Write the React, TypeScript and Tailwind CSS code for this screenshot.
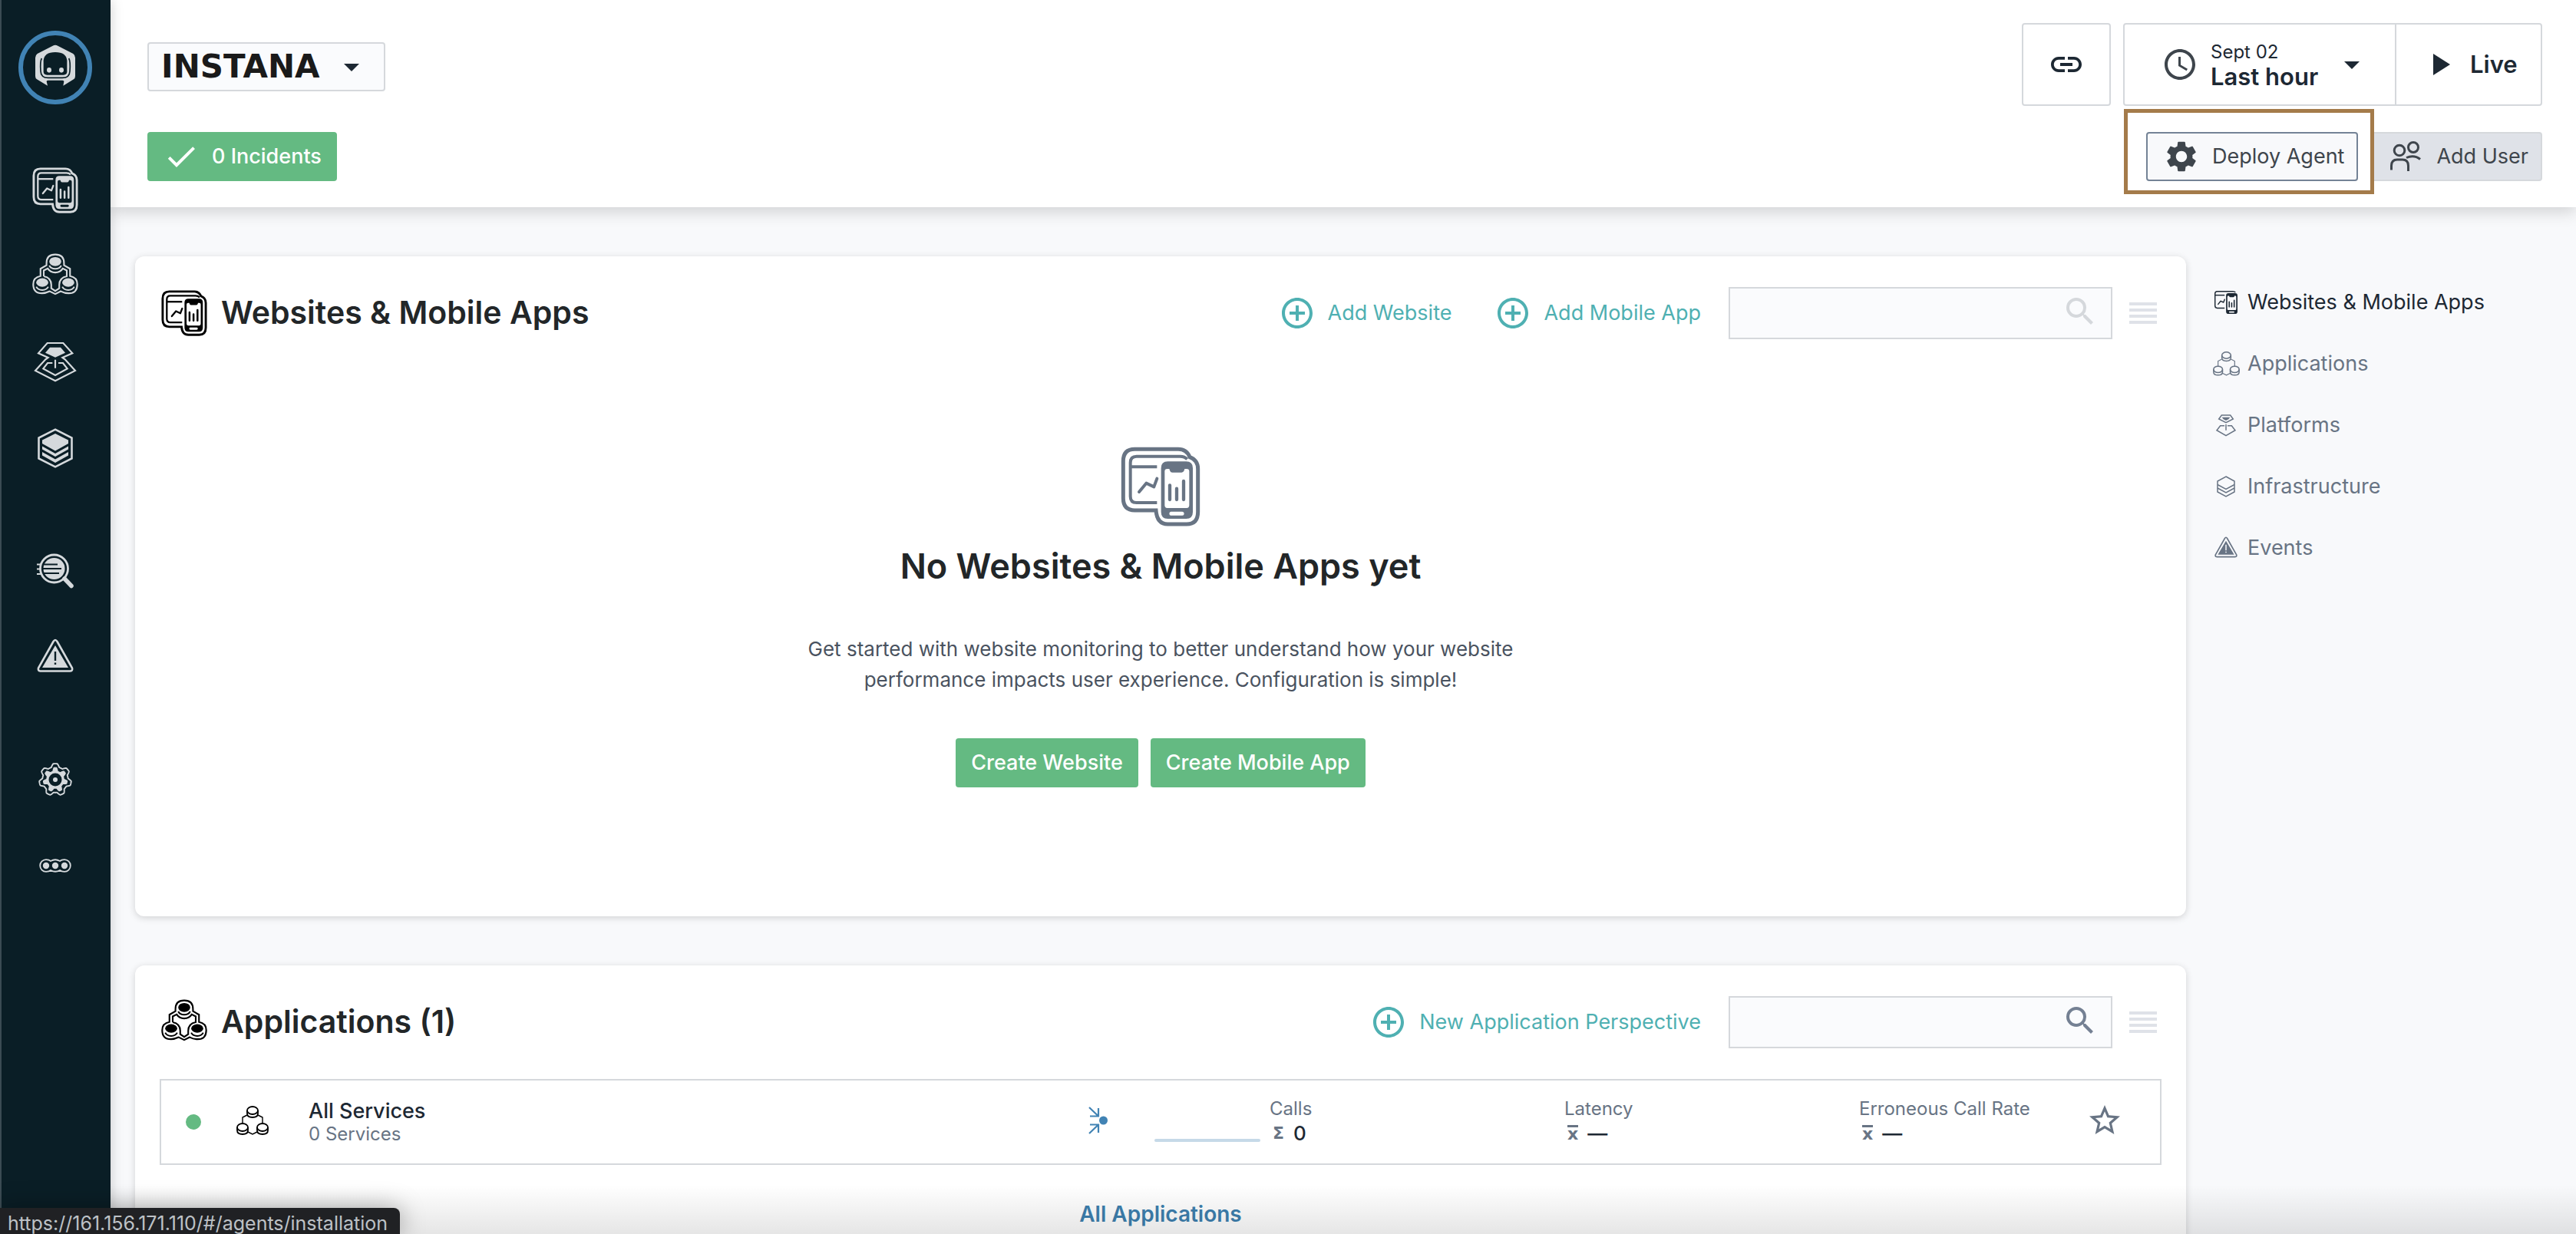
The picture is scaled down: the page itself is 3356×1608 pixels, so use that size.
import React from "react";
import {
  MdAccessTime,
  MdAddCircleOutline,
  MdArrowDropDown,
  MdCheck,
  MdLink,
  MdPlayArrow,
  MdSearch,
  MdSettings,
  MdStarBorder,
} from "react-icons/md";

type IconProps = { className?: string };

/* ---------- product icons ---------- */

function BrowserAndPhone() {
  return (
    <>
      <g fill="none" stroke="currentColor" strokeWidth="12">
        <path d="M172 254H92Q68 254 68 230V98Q68 73 92 73H262Q280 73 290 84" />
        <path d="M68 114H172" />
        <path d="M102 212L130 178L160 192L172 160" strokeLinecap="round" strokeLinejoin="round" />
      </g>
      <path
        fill="currentColor"
        fillRule="evenodd"
        d="M214 93H286Q312 93 312 119V291Q312 317 286 317H214Q188 317 188 291V119Q188 93 214 93ZM212 122Q202 122 202 132V264Q202 275 212 275H288Q298 275 298 264V132Q298 122 288 122H280Q277 136 268 136H232Q223 136 220 122ZM227 289Q220 289 220 296.500Q220 304 227 304H271Q278 304 278 296.500Q278 289 271 289Z"
      />
      <path
        d="M222 186V242M249 199V242M276 170V242"
        stroke="currentColor"
        strokeWidth="13"
        strokeLinecap="round"
      />
    </>
  );
}

function WebsitesIcon({ className }: IconProps) {
  return (
    <svg viewBox="30 35 312 312" className={className} aria-hidden="true">
      <path
        d="M85 45H255Q288 45 300 76Q332 88 332 122V290Q332 338 288 338H214Q172 338 168 284H85Q40 284 40 237V92Q40 45 85 45Z"
        fill="none"
        stroke="currentColor"
        strokeWidth="15"
      />
      <BrowserAndPhone />
    </svg>
  );
}

function WebsitesSmallIcon({ className }: IconProps) {
  return (
    <svg viewBox="62 67 250 250" className={className} aria-hidden="true">
      <BrowserAndPhone />
    </svg>
  );
}

function ApplicationsIcon({ className }: IconProps) {
  return (
    <svg viewBox="76 898 184 184" className={className} aria-hidden="true">
      <g fill="none" stroke="currentColor" strokeWidth="6.500">
        <path d="M133 946V938Q133 903 168 903Q203 903 203 938V946L227 960V989Q256 994 256 1022Q256 1058 222 1058Q205 1058 190 1050L168 1061L146 1050Q130 1058 115 1058Q80 1058 80 1022Q80 994 109 989V960Z" />
        <path d="M122 990V967L138 959Q148 975 168 975Q188 975 198 959L214 967V990Q184 996 184 1024V1038L168 1049L152 1038V1024Q152 996 122 990" />
        <path d="M144 947Q150 960 168 960Q186 960 192 947" strokeWidth="6" />
        <path d="M92 1032Q98 1045 116 1045Q134 1045 140 1032" strokeWidth="6" />
        <path d="M196 1032Q202 1045 220 1045Q238 1045 244 1032" strokeWidth="6" />
      </g>
      <g fill="currentColor">
        <ellipse cx="168" cy="931" rx="24" ry="18" />
        <ellipse cx="116" cy="1015" rx="24" ry="17" />
        <ellipse cx="220" cy="1015" rx="24" ry="17" />
      </g>
    </svg>
  );
}

function ApplicationsSmallIcon({ className }: IconProps) {
  return (
    <svg
      viewBox="0 0 42 38"
      className={className}
      fill="none"
      stroke="currentColor"
      strokeWidth="1.800"
      aria-hidden="true"
    >
      <ellipse cx="21" cy="6" rx="7" ry="5" />
      <path d="M14 6V10Q14 15 21 15Q28 15 28 10V6" />
      <ellipse cx="8" cy="28" rx="7" ry="5" />
      <path d="M1 28V32Q1 37 8 37Q15 37 15 32V28" />
      <ellipse cx="34" cy="28" rx="7" ry="5" />
      <path d="M27 28V32Q27 37 34 37Q41 37 41 32V28" />
      <path d="M14 12L8 15V23M28 12L34 15V23M14 33.500L21 37L28 33.500" strokeWidth="1.400" />
    </svg>
  );
}

function PlatformsIcon({ className }: IconProps) {
  return (
    <svg viewBox="84 1246 168 160" className={className} aria-hidden="true">
      <g fill="none" stroke="currentColor" strokeWidth="6.500">
        <path d="M137 1252H199L235 1292L196 1309L206 1316L246 1360L168 1400L90 1360L130 1316L140 1309L102 1292Z" />
        <path d="M157 1330H138L121 1352L168 1378L215 1352L198 1330H180M168 1317V1350" />
      </g>
      <path d="M147 1269H189L207 1290L168 1308L129 1290Z" fill="currentColor" />
    </svg>
  );
}

function PlatformsSmallIcon({ className }: IconProps) {
  return (
    <svg viewBox="135 598 90 90" className={className} aria-hidden="true">
      <g fill="none" stroke="currentColor" strokeWidth="4.500">
        <path d="M163 604H197L208 619L180 633L152 619Z" />
        <path d="M174 645H158L144 663L180 684L216 663L202 645H186M180 640V663" />
      </g>
      <path d="M164 612H196L190 620L180 625L170 620Z" fill="currentColor" />
    </svg>
  );
}

function InfrastructureIcon({ className }: IconProps) {
  return (
    <svg viewBox="0 0 46 52" className={className} aria-hidden="true">
      <path
        d="M23 1.600L44.500 12.500V39.500L23 50.400L1.500 39.500V12.500Z"
        fill="none"
        stroke="currentColor"
        strokeWidth="2.600"
      />
      <path
        fill="currentColor"
        d="M23 7L40 15.500V20L23 29.500L6 20V15.500ZM6 23.500L23 33L40 23.500V27.500L23 37L6 27.500ZM6 31L23 40.500L40 31V35.500L23 45L6 35.500Z"
      />
    </svg>
  );
}

function InfrastructureSmallIcon({ className }: IconProps) {
  return (
    <svg
      viewBox="0 0 24 28"
      className={className}
      fill="none"
      stroke="currentColor"
      strokeWidth="1.500"
      aria-hidden="true"
    >
      <path d="M12 1L23 7V21L12 27L1 21V7Z" />
      <path d="M1 11.500L12 17.500L23 11.500M1 16L12 22L23 16" />
    </svg>
  );
}

function AnalyzeIcon({ className }: IconProps) {
  return (
    <svg viewBox="0 0 48 46" className={className} fill="none" aria-hidden="true">
      <circle cx="22.500" cy="20" r="18" stroke="currentColor" strokeWidth="2.800" />
      <circle cx="22.500" cy="20" r="14" fill="currentColor" />
      <path d="M8 14.500H27M8 20H32M8 26H29" stroke="#0a1e26" strokeWidth="2" />
      <path d="M0 14.500H5M0 20.500H4M0 27H5" stroke="currentColor" strokeWidth="2" />
      <path d="M36 33L45 42.500" stroke="currentColor" strokeWidth="5.500" strokeLinecap="round" />
    </svg>
  );
}

function EventsIcon({ className }: IconProps) {
  return (
    <svg viewBox="0 0 48 48" className={className} aria-hidden="true">
      <path
        d="M21.500 4Q24 0 26.500 4L46 38.500Q47 42 43.500 42.500H4.500Q1 42 2 38.500Z"
        fill="none"
        stroke="currentColor"
        strokeWidth="2.600"
      />
      <path
        fill="currentColor"
        fillRule="evenodd"
        d="M24 9L41 38H7ZM22.800 17V29H25.200V17ZM22.800 31.500V34H25.200V31.500Z"
      />
    </svg>
  );
}

function cogPath(teeth: number, base: number, depth: number) {
  const points: string[] = [];
  for (let i = 0; i < 280; i++) {
    const a = (i / 280) * Math.PI * 2;
    const wave = Math.max(-0.8, Math.min(0.8, Math.cos(a * teeth) * 1.3));
    const r = base + depth * wave;
    points.push(`${(22 + r * Math.sin(a)).toFixed(2)} ${(22 - r * Math.cos(a)).toFixed(2)}`);
  }
  return `M${points.join("L")}Z`;
}

const OUTER_COG = cogPath(7, 18.8, 2.6);
const INNER_COG = cogPath(7, 14, 2.8);

function SettingsCogIcon({ className }: IconProps) {
  return (
    <svg viewBox="0 0 44 44" className={className} aria-hidden="true">
      <path d={OUTER_COG} fill="none" stroke="currentColor" strokeWidth="1.900" strokeLinejoin="round" />
      <path
        d={`${INNER_COG}M22 13.500A8.500 8.500 0 1 0 22 30.500A8.500 8.500 0 1 0 22 13.500Z`}
        fill="currentColor"
        fillRule="evenodd"
      />
      <circle cx="22" cy="22" r="3" fill="currentColor" />
    </svg>
  );
}

function MoreIcon({ className }: IconProps) {
  return (
    <svg viewBox="0 0 42 18" className={className} aria-hidden="true">
      <path
        d="M9 1.200Q13 1.200 15 3Q21 -.500 27 3Q29 1.200 33 1.200A7.800 7.800 0 0 1 33 16.800Q29 16.800 27 15Q21 18.500 15 15Q13 16.800 9 16.800A7.800 7.800 0 0 1 9 1.200Z"
        fill="none"
        stroke="currentColor"
        strokeWidth="1.800"
      />
      <g fill="currentColor">
        <circle cx="9" cy="9" r="4.200" />
        <circle cx="21" cy="9" r="4.200" />
        <circle cx="33" cy="9" r="4.200" />
      </g>
    </svg>
  );
}

function RobotLogo({ className }: IconProps) {
  return (
    <svg viewBox="24 30 288 288" className={className} aria-hidden="true">
      <circle cx="168" cy="174" r="135" fill="none" stroke="#4183b4" strokeWidth="18" />
      <path
        d="M158 89Q168 84 178 89L238 120Q246 126 246 136V208Q246 216 240 220L199 245L202 229Q203 224 196 224H140Q133 224 134 229L138 245L96 220Q90 216 90 208V136Q90 126 98 120Z"
        fill="#d5d9dc"
      />
      <path
        d="M122 148Q124 114 168 114Q212 114 214 148V190Q214 203 200 203H136Q122 203 122 190Z"
        fill="#0a1e26"
      />
      <path
        d="M115 138Q108 150 111 188Q112 214 140 214H196Q224 214 225 188Q228 150 221 138"
        fill="none"
        stroke="#0a1e26"
        strokeWidth="5"
      />
      <g fill="#d5d9dc">
        <ellipse cx="144" cy="184" rx="9" ry="10" />
        <ellipse cx="192" cy="184" rx="9" ry="10" />
      </g>
    </svg>
  );
}

function PeopleIcon({ className }: IconProps) {
  return (
    <svg
      viewBox="0 0 40 40"
      className={className}
      fill="none"
      stroke="currentColor"
      strokeWidth="3"
      aria-hidden="true"
    >
      <circle cx="12" cy="12" r="6.800" />
      <circle cx="30" cy="8" r="6.500" />
      <path d="M1.500 37.500V32Q1.500 24 9 24H16Q23.500 24 23.500 32V39" />
      <path d="M21 21.500Q31 17 39 23.500" />
    </svg>
  );
}

function IncomingIcon({ className }: IconProps) {
  return (
    <svg
      viewBox="0 0 26 36"
      className={className}
      fill="none"
      stroke="currentColor"
      strokeWidth="2.200"
      aria-hidden="true"
    >
      <path d="M1 1L12 11.500M13 2V12.500H2M1 35L12 24.500M13 34V23.500H2" />
      <circle cx="19.500" cy="18" r="5.500" fill="currentColor" stroke="none" />
    </svg>
  );
}

function ListIcon({ className }: IconProps) {
  return (
    <svg viewBox="0 0 36 28" className={className} fill="currentColor" aria-hidden="true">
      <path d="M0 0H36V4H0ZM0 8H36V12H0ZM0 16H36V20H0ZM0 24H36V28H0Z" />
    </svg>
  );
}

/* ---------- building blocks ---------- */

const sidebarGroups = [
  [
    { label: "Websites & Mobile Apps", icon: <WebsitesIcon className="size-[60px]" /> },
    { label: "Applications", icon: <ApplicationsIcon className="size-[60px]" /> },
    { label: "Platforms", icon: <PlatformsIcon className="w-14" /> },
    { label: "Infrastructure", icon: <InfrastructureIcon className="w-[46px]" /> },
  ],
  [
    { label: "Analytics", icon: <AnalyzeIcon className="w-12" /> },
    { label: "Events", icon: <EventsIcon className="w-12" /> },
  ],
  [
    { label: "Settings", icon: <SettingsCogIcon className="w-11" /> },
    { label: "More", icon: <MoreIcon className="w-[42px]" /> },
  ],
];

function Sidebar() {
  return (
    <aside className="relative z-20 flex w-36 shrink-0 flex-col items-center border-l-2 border-[#3b4b53] bg-[#0a1e26] pt-10 pr-0.5 text-[#d5d9dc] shadow-[0_0_16px_rgba(0,0,0,0.2)]">
      <a href="#/" aria-label="Home">
        <RobotLogo className="size-24" />
      </a>
      <nav aria-label="Main" className="mt-14 flex flex-col gap-12">
        {sidebarGroups.map((group, i) => (
          <div key={i} className="flex flex-col">
            {group.map((item) => (
              <a
                key={item.label}
                href="#/"
                aria-label={item.label}
                className="flex h-28 w-32 items-center justify-center"
              >
                {item.icon}
              </a>
            ))}
          </div>
        ))}
      </nav>
    </aside>
  );
}

function Header() {
  return (
    <header className="relative z-10 flex items-start justify-between bg-white pr-11 pb-[34px] pl-12 text-[#1d2833] shadow-[0_6px_20px_rgba(0,0,0,0.16)]">
      <div className="flex flex-col items-start gap-[53px] pt-[55px]">
        <button
          type="button"
          aria-haspopup="listbox"
          className="flex h-16 w-[310px] items-center justify-between rounded border-2 border-[#d5d8dc] bg-[#fafbfd] pr-[18px] pl-4"
        >
          <span className="font-['DejaVu_Sans',sans-serif] text-[42px] leading-none font-bold text-[#1a1a1a]">
            INSTANA
          </span>
          <MdArrowDropDown className="size-12" />
        </button>
        <button
          type="button"
          className="flex h-16 items-center gap-4 rounded bg-[#64ba82] px-5 text-[27px] font-medium text-white"
        >
          <MdCheck className="size-12" />
          0 Incidents
        </button>
      </div>

      <div className="flex flex-col items-end gap-[34px] pt-[30px]">
        <div className="flex h-[108px] gap-4">
          <button
            type="button"
            aria-label="Copy link"
            className="flex w-[116px] items-center justify-center rounded border-2 border-[#d5d8dc]"
          >
            <MdLink className="size-12" />
          </button>
          <div className="flex rounded border-2 border-[#d5d8dc]">
            <button type="button" className="flex w-[352px] items-center pl-12 text-left">
              <MdAccessTime className="size-12 text-[#3e454c]" />
              <span className="ml-4 w-[152px]">
                <span className="block text-2xl leading-8">Sept 02</span>
                <span className="block text-[31px] leading-8 font-semibold">Last hour</span>
              </span>
              <MdArrowDropDown className="ml-2 size-12" />
            </button>
            <button
              type="button"
              className="flex w-[190px] items-center gap-4 border-l-2 border-[#d5d8dc] pl-8 text-[31px] font-semibold"
            >
              <MdPlayArrow className="size-12" />
              Live
            </button>
          </div>
        </div>
        <div className="flex gap-4 text-[27px] text-[#3e454c]">
          <div className="relative z-10">
            <button
              type="button"
              className="flex h-16 items-center gap-4 rounded border-2 border-[#748396] bg-[#f8f9fb] pr-4 pl-5"
            >
              <MdSettings className="size-12" />
              Deploy Agent
            </button>
            <div className="pointer-events-none absolute -top-[30px] -right-[21px] -bottom-[17px] -left-[29px] border-[5px] border-[#a47b4a]" />
          </div>
          <button
            type="button"
            className="flex h-16 items-center gap-5 rounded border-2 border-[#d5d8dc] bg-[#dfe2e8] pr-4 pl-6"
          >
            <PeopleIcon className="size-10" />
            Add User
          </button>
        </div>
      </div>
    </header>
  );
}

function AddButton({ children }: { children: React.ReactNode }) {
  return (
    <button type="button" className="flex items-center gap-4 text-[27px] text-[#4fb0b2]">
      <MdAddCircleOutline className="size-12" />
      {children}
    </button>
  );
}

function SectionHeader({
  icon,
  title,
  actions,
  searchLabel,
  searchIconClass,
}: {
  icon: React.ReactNode;
  title: string;
  actions: React.ReactNode;
  searchLabel: string;
  searchIconClass: string;
}) {
  return (
    <div className="flex h-[68px] items-center">
      {icon}
      <h2 className="ml-[18px] text-[41px] font-semibold text-[#222628]">{title}</h2>
      <div className="ml-auto flex items-center gap-14">{actions}</div>
      <div className="relative ml-9 h-[68px] w-[500px]">
        <input
          type="search"
          aria-label={searchLabel}
          className="h-full w-full border-2 border-[#d5d8dc] bg-[#fafbfd] pr-20 pl-5 text-[27px]"
        />
        <MdSearch className={searchIconClass} />
      </div>
      <button type="button" aria-label="List view" className="ml-[22px] text-[#dfe2e8]">
        <ListIcon className="w-9" />
      </button>
    </div>
  );
}

function WebsitesCard() {
  return (
    <section className="rounded-xl bg-white pt-10 pr-[38px] pb-[168px] pl-[34px] shadow-[0_2px_10px_rgba(0,0,0,0.16)]">
      <SectionHeader
        icon={<WebsitesIcon className="size-[60px]" />}
        title="Websites & Mobile Apps"
        searchLabel="Search websites and mobile apps"
        searchIconClass="pointer-events-none absolute top-2 right-[18px] size-12 text-[#d5d8dc]"
        actions={
          <>
            <AddButton>Add Website</AddButton>
            <AddButton>Add Mobile App</AddButton>
          </>
        }
      />
      <div className="mt-[140px] flex flex-col items-center pl-1 text-center">
        <WebsitesIcon className="size-[104px] text-[#687484]" />
        <h3 className="mt-6 text-[45px] leading-[56px] font-semibold text-[#222628]">
          No Websites &amp; Mobile Apps yet
        </h3>
        <p className="mt-[60px] w-[940px] text-[26px] leading-10 text-[#4a5360]">
          Get started with website monitoring to better understand how your website performance
          impacts user experience. Configuration is simple!
        </p>
        <div className="mt-14 flex gap-4 text-[27px] font-medium text-white">
          <button type="button" className="h-16 rounded bg-[#64ba82] px-5">
            Create Website
          </button>
          <button type="button" className="h-16 rounded bg-[#64ba82] px-5">
            Create Mobile App
          </button>
        </div>
      </div>
    </section>
  );
}

function SumSymbol() {
  return <span className="font-['DejaVu_Sans',sans-serif] text-[22px]">Σ</span>;
}

function MeanSymbol() {
  return (
    <span
      aria-label="mean"
      className="border-t-[3px] border-[#687484] font-['DejaVu_Sans',sans-serif] text-[22px] leading-[17px]"
    >
      x
    </span>
  );
}

function Metric({
  label,
  symbol,
  value,
}: {
  label: string;
  symbol: React.ReactNode;
  value: string;
}) {
  return (
    <div>
      <dt className="text-2xl leading-8 text-[#687484]">{label}</dt>
      <dd className="flex h-[30px] items-center gap-3 pl-1 text-[26px] font-medium text-[#1d2833]">
        <span className="flex font-bold text-[#687484]">{symbol}</span>
        {value}
      </dd>
    </div>
  );
}

function ApplicationsCard() {
  return (
    <section className="rounded-xl bg-white px-8 pt-10 pb-16 shadow-[0_2px_10px_rgba(0,0,0,0.16)]">
      <div className="pr-[6px] pl-[2px]">
        <SectionHeader
          icon={<ApplicationsIcon className="size-[60px]" />}
          title="Applications (1)"
          searchLabel="Search applications"
          searchIconClass="pointer-events-none absolute top-2 right-[18px] size-12 text-[#748093]"
          actions={<AddButton>New Application Perspective</AddButton>}
        />
      </div>
      <div className="mt-10 flex h-28 items-center border-2 border-[#d5d8dc] pl-8">
        <span className="size-5 rounded-full bg-[#64ba82]" />
        <ApplicationsSmallIcon className="mb-1 ml-[46px] w-[42px] text-black" />
        <div className="ml-[52px]">
          <a href="#/applications" className="block text-[27px] leading-8 font-medium text-[#1d2833]">
            All Services
          </a>
          <p className="text-2xl leading-7 text-[#687484]">0 Services</p>
        </div>
        <IncomingIcon className="mb-1 ml-auto h-9 text-[#4183b4]" />
        <div className="mt-12 ml-[60px] h-1 w-[138px] rounded-sm bg-[#c6d9e8]" />
        <dl className="mb-1 ml-3 grid grid-cols-[384px_384px_296px]">
          <Metric label="Calls" symbol={<SumSymbol />} value="0" />
          <Metric label="Latency" symbol={<MeanSymbol />} value="—" />
          <Metric label="Erroneous Call Rate" symbol={<MeanSymbol />} value="—" />
        </dl>
        <button type="button" aria-label="Add to favorites" className="mr-12 mb-1 text-[#687484]">
          <MdStarBorder className="size-12" />
        </button>
      </div>
      <div className="mt-11 text-center">
        <a href="#/applications" className="text-[28px] leading-10 font-semibold text-[#3d7fae]">
          All Applications
        </a>
      </div>
    </section>
  );
}

const sections = [
  { label: "Websites & Mobile Apps", icon: <WebsitesSmallIcon className="w-[30px]" />, active: true },
  { label: "Applications", icon: <ApplicationsSmallIcon className="w-[35px]" />, active: false },
  { label: "Platforms", icon: <PlatformsSmallIcon className="w-[30px]" />, active: false },
  { label: "Infrastructure", icon: <InfrastructureSmallIcon className="w-6" />, active: false },
  { label: "Events", icon: <EventsIcon className="w-[30px]" />, active: false },
];

function SectionNav() {
  return (
    <nav aria-label="Sections" className="w-[508px] shrink-0 pt-5 pl-[34px]">
      <ul>
        {sections.map((s) => (
          <li key={s.label}>
            <a
              href="#/"
              aria-current={s.active ? "true" : undefined}
              className={
                s.active
                  ? "flex h-20 items-center gap-2.5 text-[27px] text-[#1d2833]"
                  : "flex h-20 items-center gap-2.5 text-[27px] text-[#687484]"
              }
            >
              <span className="flex w-9 justify-center">{s.icon}</span>
              {s.label}
            </a>
          </li>
        ))}
      </ul>
    </nav>
  );
}

export default function App() {
  return (
    <div className="relative flex h-screen overflow-hidden bg-[#f8f9fb] font-['Inter',sans-serif]">
      <Sidebar />
      <div className="flex min-w-0 flex-1 flex-col">
        <Header />
        <main className="flex min-h-0 flex-1 overflow-hidden pt-16 pl-8">
          <div className="flex min-w-0 flex-1 flex-col gap-16">
            <WebsitesCard />
            <ApplicationsCard />
          </div>
          <SectionNav />
        </main>
      </div>
      <div className="pointer-events-none absolute inset-x-0 bottom-0 z-10 h-16 bg-linear-to-b from-black/0 to-black/10" />
      <div className="absolute bottom-0 left-0 z-30 h-[34px] rounded-tr-lg bg-[#202124] pr-4 pl-2.5 text-[25px] leading-[40px] text-[#bdc1c6] shadow-[0_0_32px_rgba(0,0,0,0.35)]">
        https://161.156.171.110/#/agents/installation
      </div>
    </div>
  );
}
